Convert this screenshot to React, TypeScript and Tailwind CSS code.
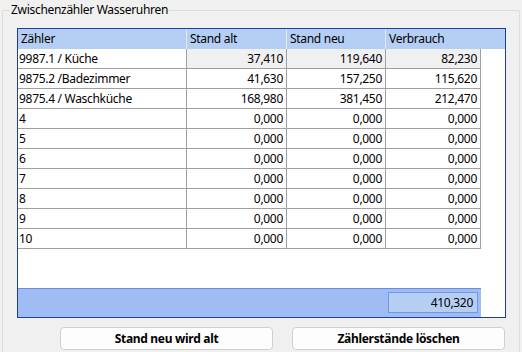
import React from "react"

const rows = [
	{ name: "9987.1 / Küche", alt: "37,410", neu: "119,640", verbrauch: "82,230" },
	{ name: "9875.2 /Badezimmer", alt: "41,630", neu: "157,250", verbrauch: "115,620" },
	{ name: "9875.4 / Waschküche", alt: "168,980", neu: "381,450", verbrauch: "212,470" },
	{ name: "4", alt: "0,000", neu: "0,000", verbrauch: "0,000" },
	{ name: "5", alt: "0,000", neu: "0,000", verbrauch: "0,000" },
	{ name: "6", alt: "0,000", neu: "0,000", verbrauch: "0,000" },
	{ name: "7", alt: "0,000", neu: "0,000", verbrauch: "0,000" },
	{ name: "8", alt: "0,000", neu: "0,000", verbrauch: "0,000" },
	{ name: "9", alt: "0,000", neu: "0,000", verbrauch: "0,000" },
	{ name: "10", alt: "0,000", neu: "0,000", verbrauch: "0,000" },
]

export default function App() {
	return (
		<div className="w-[522px] h-[352px] bg-[#f0f0f0] overflow-hidden text-[12px] leading-[16px] tracking-[-0.3px] text-black font-['Noto_Sans','Liberation_Sans',sans-serif]">
			<div className="relative ml-[2px] mt-[10px] w-[518px] h-[360px] border border-[#dcdcdc] rounded-[2px]">
				<span className="absolute left-[7px] top-[-9px] bg-[#f0f0f0] px-[1px]">
					Zwischenzähler Wasseruhren
				</span>

				<div className="ml-[14px] mt-[17px] w-[489px] h-[290px] border border-[#1c3f9c] bg-white flex flex-col">
					<div className="flex h-[20px] bg-[#b5cff4]">
						<div className="w-[169px] border-r border-[#dde8f8] pl-[3px] leading-[19px]">Zähler</div>
						<div className="w-[100px] border-r border-[#dde8f8] pl-[3px] leading-[19px]">Stand alt</div>
						<div className="w-[99px] border-r border-[#dde8f8] pl-[3px] leading-[19px]">Stand neu</div>
						<div className="w-[95px] pl-[3px] leading-[19px]">Verbrauch</div>
					</div>

					{rows.map((r, i) => (
						<div key={r.name} className="flex h-[20px]">
							<div className="w-[169px] border-r border-b border-[#a0a0a0] pl-[1px] leading-[19px]">{r.name}</div>
							<div className={`w-[100px] border-r border-b border-[#a0a0a0] pr-[3px] text-right leading-[19px] ${i === 0 ? "bg-[#f0f0f0]" : ""}`}>{r.alt}</div>
							<div className={`w-[99px] border-r border-b border-[#a0a0a0] pr-[3px] text-right leading-[19px] ${i === 0 ? "bg-[#f0f0f0]" : ""}`}>{r.neu}</div>
							<div className={`w-[95px] border-r border-b border-[#a0a0a0] pr-[3px] text-right leading-[19px] ${i === 0 ? "bg-[#f0f0f0]" : ""}`}>{r.verbrauch}</div>
						</div>
					))}

					<div className="flex-1" />

					<div className="flex h-[29px]">
						<div className="w-[463px] bg-[#9fbdf4] border-t border-[#6a8fd8] flex justify-end pt-[3px] pr-[3px]">
							<div className="w-[90px] h-[21px] bg-[#b5cff4] border border-[#7596dc] text-right pr-[4px] leading-[19px]">
								410,320
							</div>
						</div>
					</div>
				</div>

				<div className="flex gap-[19px] ml-[57px] mt-[9px]">
					<button className="w-[213px] h-[23px] bg-[#fdfdfd] border border-[#d0d0d0] rounded-[4px] font-bold leading-[20px]">
						Stand neu wird alt
					</button>
					<button className="w-[213px] h-[23px] bg-[#fdfdfd] border border-[#d0d0d0] rounded-[4px] font-bold leading-[20px]">
						Zählerstände löschen
					</button>
				</div>
			</div>
		</div>
	)
}
